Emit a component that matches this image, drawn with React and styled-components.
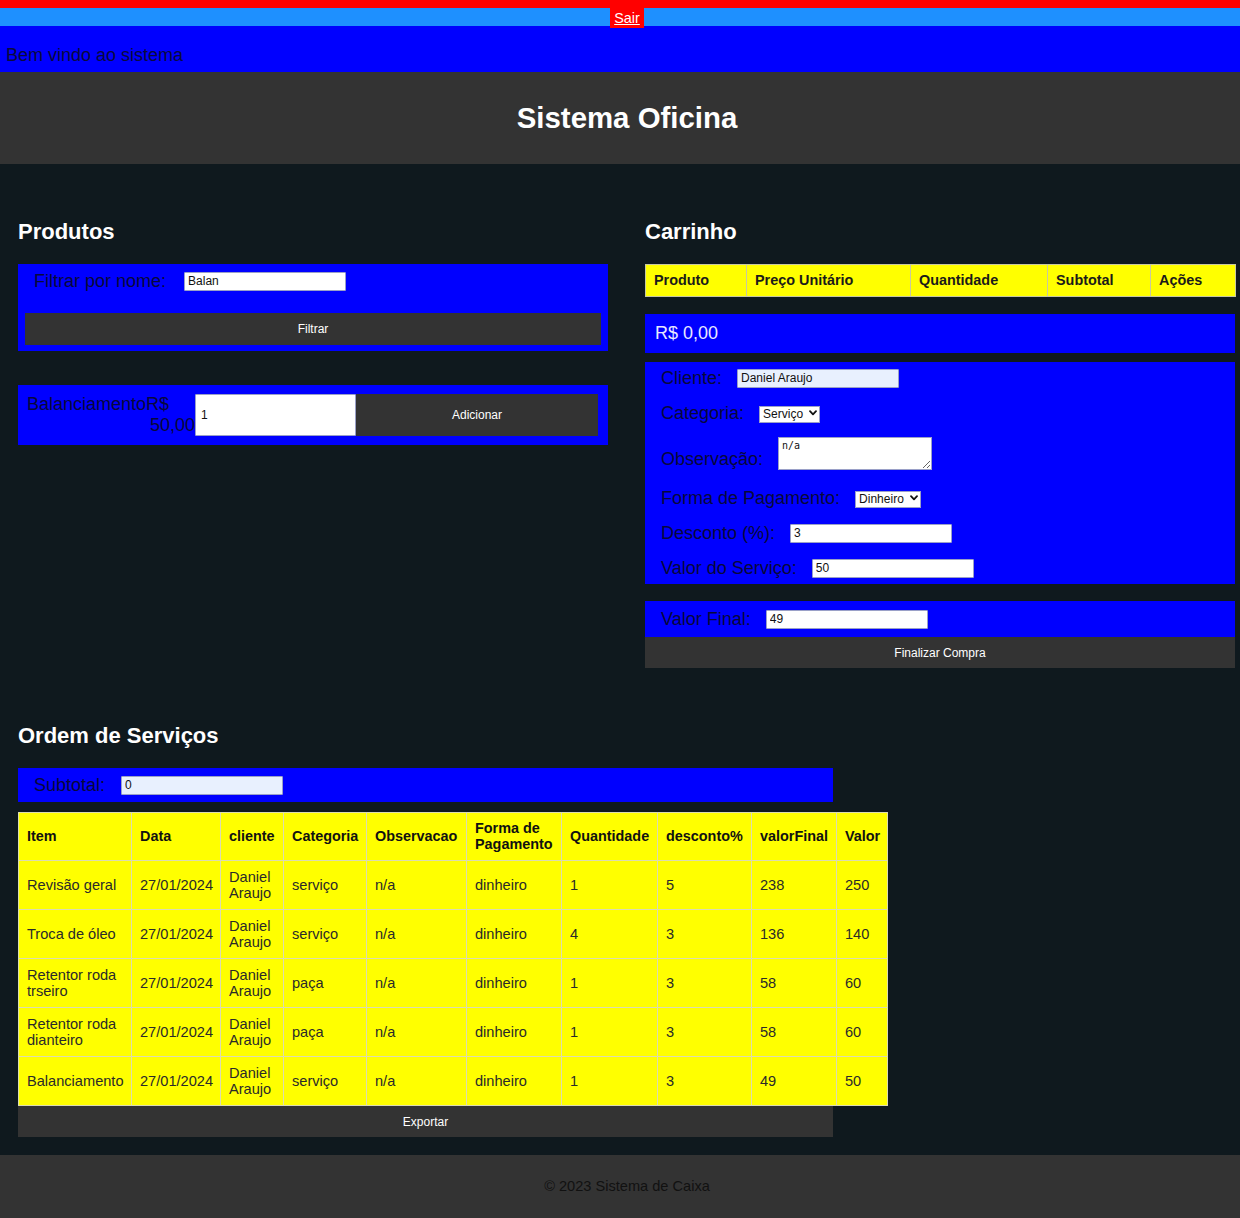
import React from "react";
import styled, { createGlobalStyle } from "styled-components";

const Global = createGlobalStyle`
  html, body { margin: 0; padding: 0; overflow-x: hidden; }
  body { font-family: "Liberation Sans", Arial, sans-serif; font-size: 14.4px; background: #0f191e; }
  * { box-sizing: border-box; }
`;

const Page = styled.div`width: 1254px;`;
const TopStrip = styled.div`height: 8px; background: #ff0000;`;
const NavBar = styled.nav`
  height: 18px; background: #1e90ff; display: flex; justify-content: center;
`;
const LogoutLink = styled.a`
  display: block; height: 20px; line-height: 20px; padding: 0 4px; background: #ff0000;
  color: #fff; text-decoration: underline; font-size: 14.4px; position: relative; z-index: 1;
`;
const Welcome = styled.div`
  background: #0000ff; color: #0a0a3c; font-size: 18px; line-height: 21px; padding: 19px 6px 6px;
`;
const Header = styled.header`
  background: #333; color: #fff; text-align: center; padding: 29px 0 30px;
  h1 { margin: 0; font-size: 29.4px; line-height: 33px; font-weight: bold; }
`;
const Main = styled.main`padding: 55px 18px 18px 18px; background: #0f191e;`;
const Columns = styled.div`
  display: grid; grid-template-columns: 590px 590px; column-gap: 37px; align-items: start;
`;
const Heading = styled.h2`
  margin: 0 0 20px; color: #fff; font-size: 22px; line-height: 25px; font-weight: bold;
`;
const BlueBox = styled.div`background: #0000ff;`;
const Label = styled.label`
  color: #08083a; font-size: 18px; line-height: 22px; white-space: nowrap;
`;
const TextInput = styled.input`
  width: ${p => p.$w || 162}px; height: ${p => p.$h || 19}px; font-family: "Liberation Sans", Arial, sans-serif;
  font-size: 12px; padding: 1px 3px; border: 1px solid #9aa0c8; border-radius: 1px;
  background: ${p => (p.$filled ? "#e8f0fe" : "#fff")}; color: #111; margin: 0;
`;
const SelectWrap = styled.span`
  position: relative; display: inline-block; width: ${p => p.$w}px; height: 17px;
  svg { position: absolute; right: 3px; top: 5px; pointer-events: none; }
`;
const Select = styled.select`
  appearance: none; -webkit-appearance: none; width: 100%; height: 17px;
  font-family: "Liberation Sans", Arial, sans-serif; font-size: 12px; line-height: 15px;
  padding: 0 12px 0 3px; border: 1px solid #9aa0c8; border-radius: 0; background: #fff; color: #111; margin: 0;
`;
const TextArea = styled.textarea`
  width: 154px; height: 33px; font-family: "DejaVu Sans Mono", "Liberation Mono", monospace; font-size: 10px;
  padding: 2px 3px; border: 1px solid #9aa0c8; background: #fff; color: #111; margin: 0;
`;
const DarkButton = styled.button`
  display: block; width: ${p => p.$w || "100%"}; height: ${p => p.$h || 32}px; border: none; background: #333;
  color: #fff; font-family: "Liberation Sans", Arial, sans-serif; font-size: 12px; margin: 0; padding: 0;
`;

/* Produtos */
const FilterBox = styled(BlueBox)`padding: 6px 7px 6px;`;
const FilterRow = styled.div`
  display: flex; align-items: center; gap: 18px; padding-left: 9px; height: 22px; margin-bottom: 21px;
`;
const ProductCard = styled(BlueBox)`
  margin-top: 34px; padding: 9px; display: flex; align-items: flex-start;
`;
const ProductName = styled.div`
  width: 168px; color: #08083a; font-size: 18px; line-height: 21px; text-align: left; text-align-last: right;
`;
const QtyInput = styled(TextInput)`height: 42px; padding-left: 5px;`;

/* Carrinho */
const CartTable = styled.table`
  width: 590px; border-collapse: collapse; table-layout: fixed; background: #ffff00;
  th { text-align: left; font-weight: bold; font-size: 14.4px; line-height: 15px; padding: 8px 8px; color: #1a1a1a; border: 1px solid #c8c8a0; }
`;
const TotalBox = styled(BlueBox)`
  margin-top: 17px; height: 39px; padding: 0 10px; display: flex; align-items: center;
  color: #e8e8ff; font-size: 18px; line-height: 21px;
`;
const FormBox = styled(BlueBox)`
  margin-top: 9px; padding: 5px 16px 5px; display: flex; flex-direction: column; gap: 13px;
`;
const FieldRow = styled.div`
  display: flex; align-items: ${p => (p.$bottom ? "flex-end" : "center")}; gap: 15px; min-height: 22px;
  margin-bottom: ${p => p.$extra || 0}px;
`;
const FinalBox = styled(BlueBox)`
  margin-top: 17px; padding: 7px 16px; display: flex; align-items: center; gap: 15px; height: 36px;
`;

/* Ordem */
const OrderSection = styled.section`margin-top: 55px; width: 815px;`;
const SubtotalBox = styled(BlueBox)`
  height: 34px; padding: 0 16px; display: flex; align-items: center; gap: 16px;
`;
const OrderTable = styled.table`
  margin-top: 10px; width: 869px; border-collapse: collapse; table-layout: fixed; background: #ffff00;
  th, td { text-align: left; padding: 8px 8px; line-height: 16px; border: 1px solid #dcdcb0; vertical-align: middle; }
  th { font-weight: bold; font-size: 14.4px; color: #111; padding-top: 7px; padding-bottom: 8px; }
  td { font-size: 14.6px; color: #2a2a2a; }
`;

const Footer = styled.footer`
  background: #333; color: #111; text-align: center; font-size: 14.6px; line-height: 17px; padding: 23px 0 24px;
`;

const Chevron = () => (
  <svg width="8" height="6" viewBox="0 0 8 6" aria-hidden="true">
    <path d="M1 1.2 L4 4.4 L7 1.2" fill="none" stroke="#111" strokeWidth="1.8" strokeLinecap="round" strokeLinejoin="round" />
  </svg>
);

const orderCols = [113, 89, 63, 83, 100, 95, 96, 94, 85, 51];
const orderHead = ["Item", "Data", "cliente", "Categoria", "Observacao", "Forma de Pagamento", "Quantidade", "desconto%", "valorFinal", "Valor"];
const orders = [
  ["Revisão geral", "1", "5", "238", "250", "serviço"],
  ["Troca de óleo", "4", "3", "136", "140", "serviço"],
  ["Retentor roda trseiro", "1", "3", "58", "60", "paça"],
  ["Retentor roda dianteiro", "1", "3", "58", "60", "paça"],
  ["Balanciamento", "1", "3", "49", "50", "serviço"],
];
const cartCols = [101, 164, 137, 103, 85];

export default function App() {
  return (
    <Page>
      <Global />
      <TopStrip />
      <NavBar><LogoutLink href="#">Sair</LogoutLink></NavBar>
      <Welcome>Bem vindo ao sistema</Welcome>
      <Header><h1>Sistema Oficina</h1></Header>
      <Main>
        <Columns>
          <section>
            <Heading>Produtos</Heading>
            <FilterBox>
              <FilterRow>
                <Label>Filtrar por nome:</Label>
                <TextInput defaultValue="Balan" />
              </FilterRow>
              <DarkButton>Filtrar</DarkButton>
            </FilterBox>
            <ProductCard>
              <ProductName>BalanciamentoR$ 50,00</ProductName>
              <QtyInput $w={161} defaultValue="1" />
              <DarkButton $w="242px" $h={42}>Adicionar</DarkButton>
            </ProductCard>
          </section>
          <section>
            <Heading>Carrinho</Heading>
            <CartTable>
              <colgroup>{cartCols.map((w, i) => <col key={i} style={{ width: w }} />)}</colgroup>
              <thead>
                <tr><th>Produto</th><th>Preço Unitário</th><th>Quantidade</th><th>Subtotal</th><th>Ações</th></tr>
              </thead>
            </CartTable>
            <TotalBox>R$ 0,00</TotalBox>
            <FormBox>
              <FieldRow><Label>Cliente:</Label><TextInput $filled defaultValue="Daniel Araujo" /></FieldRow>
              <FieldRow>
                <Label>Categoria:</Label>
                <SelectWrap $w={61}>
                  <Select defaultValue="servico"><option value="servico">Serviço</option><option value="peca">Peça</option></Select>
                  <Chevron />
                </SelectWrap>
              </FieldRow>
              <FieldRow $bottom $extra={4}><Label>Observação:</Label><TextArea defaultValue="n/a" /></FieldRow>
              <FieldRow>
                <Label>Forma de Pagamento:</Label>
                <SelectWrap $w={66}>
                  <Select defaultValue="dinheiro"><option value="dinheiro">Dinheiro</option><option value="cartao">Cartão</option></Select>
                  <Chevron />
                </SelectWrap>
              </FieldRow>
              <FieldRow><Label>Desconto (%):</Label><TextInput defaultValue="3" /></FieldRow>
              <FieldRow><Label>Valor do Serviço:</Label><TextInput defaultValue="50" /></FieldRow>
            </FormBox>
            <FinalBox><Label>Valor Final:</Label><TextInput defaultValue="49" /></FinalBox>
            <DarkButton $h={31}>Finalizar Compra</DarkButton>
          </section>
        </Columns>
        <OrderSection>
          <Heading>Ordem de Serviços</Heading>
          <SubtotalBox><Label>Subtotal:</Label><TextInput $filled defaultValue="0" /></SubtotalBox>
          <OrderTable>
            <colgroup>{orderCols.map((w, i) => <col key={i} style={{ width: w }} />)}</colgroup>
            <thead><tr>{orderHead.map(h => <th key={h}>{h}</th>)}</tr></thead>
            <tbody>
              {orders.map((o, i) => (
                <tr key={i}>
                  <td>{o[0]}</td><td>27/01/2024</td><td>Daniel Araujo</td><td>{o[5]}</td><td>n/a</td>
                  <td>dinheiro</td><td>{o[1]}</td><td>{o[2]}</td><td>{o[3]}</td><td>{o[4]}</td>
                </tr>
              ))}
            </tbody>
          </OrderTable>
          <DarkButton $h={31}>Exportar</DarkButton>
        </OrderSection>
      </Main>
      <Footer>© 2023 Sistema de Caixa</Footer>
    </Page>
  );
}
